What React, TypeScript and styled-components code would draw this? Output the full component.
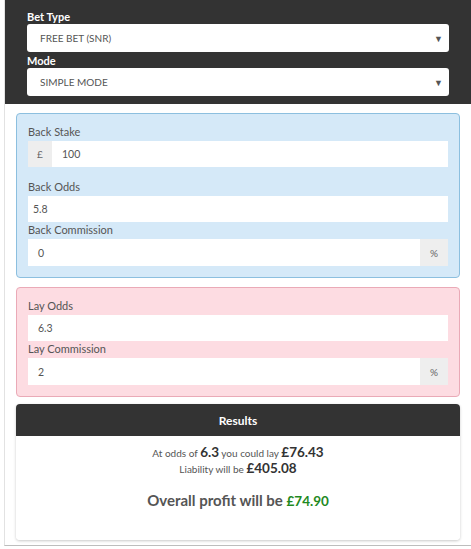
import React from "react";
import styled, { createGlobalStyle } from "styled-components";

const Global = createGlobalStyle`
  html, body { margin: 0; padding: 0; background: #fff; }
  body { font-family: "Lato", "Open Sans", sans-serif; }
  * { box-sizing: border-box; }
`;

const Page = styled.div`
  margin-left: 4px;
  width: 467px;
  height: 546px;
  border-left: 1px solid #e2e2e2;
  border-bottom: 1px solid #bdbdbd;
  display: flex;
  flex-direction: column;
`;

const Header = styled.div`
  background: #333333;
  padding: 10px 22px 8px 22px;
  display: flex;
  flex-direction: column;
`;

const HeaderLabel = styled.div`
  color: #fff;
  font-weight: 700;
  font-size: 11px;
  line-height: 14px;
  height: 14px;
`;

const Select = styled.div<{ $gap?: number }>`
  height: 28px;
  background: #fff;
  border-radius: 3px;
  display: flex;
  align-items: center;
  justify-content: space-between;
  padding: 0 6px 0 13px;
  margin-bottom: ${(p) => p.$gap ?? 0}px;
  color: #555;
  font-size: 10px;
  text-transform: uppercase;
`;

const Arrow = styled.span`
  font-size: 9px;
  color: #555;
`;

const Panel = styled.div<{ $tone: "blue" | "pink" }>`
  margin: 9px 11px 0 11px;
  background: ${(p) => (p.$tone === "blue" ? "#d5e9f8" : "#fddce2")};
  border: 1px solid ${(p) => (p.$tone === "blue" ? "#8cbfdf" : "#eaaab7")};
  border-radius: 4px;
  padding: 10px 11px 11px 11px;
  display: flex;
  flex-direction: column;
`;

const Field = styled.div<{ $space?: number }>`
  display: flex;
  flex-direction: column;
  margin-bottom: ${(p) => p.$space ?? 0}px;
`;

const Label = styled.div`
  font-size: 11px;
  line-height: 16px;
  color: #555;
  margin-bottom: 1px;
`;

const InputGroup = styled.div<{ $h?: number }>`
  display: flex;
  height: ${(p) => p.$h ?? 27}px;
  background: #fff;
`;

const Addon = styled.div<{ $w: number }>`
  width: ${(p) => p.$w}px;
  background: #eeeeee;
  color: #666;
  font-size: 10px;
  display: flex;
  align-items: center;
  justify-content: center;
`;

const Value = styled.div<{ $pad?: number }>`
  flex: 1;
  display: flex;
  align-items: center;
  padding-left: ${(p) => p.$pad ?? 10}px;
  color: #555;
  font-size: 10.5px;
`;

const Results = styled.div`
  margin: 7px 11px 0 11px;
  border-radius: 4px;
  overflow: hidden;
  box-shadow: 0 1px 3px rgba(0, 0, 0, 0.22);
  display: flex;
  flex-direction: column;
  height: 136px;
`;

const ResultsHead = styled.div`
  background: #333;
  color: #fff;
  font-weight: 700;
  font-size: 12px;
  height: 32px;
  display: flex;
  align-items: center;
  justify-content: center;
`;

const ResultsBody = styled.div`
  flex: 1;
  background: #fff;
  display: flex;
  flex-direction: column;
  align-items: center;
  padding-top: 9px;
  color: #555;
`;

const Line = styled.div`
  font-size: 10px;
  line-height: 15px;
`;

const Big = styled.b`
  font-size: 13.5px;
  color: #333;
`;

const Profit = styled.div`
  margin-top: 14px;
  font-size: 15px;
  font-weight: 700;
  color: #555;
`;

const Green = styled.span`
  color: #1f8a1f;
  font-size: 13.5px;
`;

export default function App() {
  return (
    <>
      <Global />
      <Page>
        <Header>
          <HeaderLabel>Bet Type</HeaderLabel>
          <Select $gap={2}>
            <span>Free Bet (SNR)</span>
            <Arrow>▼</Arrow>
          </Select>
          <HeaderLabel>Mode</HeaderLabel>
          <Select>
            <span>Simple Mode</span>
            <Arrow>▼</Arrow>
          </Select>
        </Header>

        <Panel $tone="blue">
          <Field $space={12}>
            <Label>Back Stake</Label>
            <InputGroup $h={26}>
              <Addon $w={24}>£</Addon>
              <Value>100</Value>
            </InputGroup>
          </Field>
          <Field>
            <Label>Back Odds</Label>
            <InputGroup $h={26}>
              <Value $pad={5}>5.8</Value>
            </InputGroup>
          </Field>
          <Field>
            <Label>Back Commission</Label>
            <InputGroup>
              <Value $pad={10}>0</Value>
              <Addon $w={28}>%</Addon>
            </InputGroup>
          </Field>
        </Panel>

        <Panel $tone="pink">
          <Field>
            <Label>Lay Odds</Label>
            <InputGroup $h={26}>
              <Value>6.3</Value>
            </InputGroup>
          </Field>
          <Field>
            <Label>Lay Commission</Label>
            <InputGroup>
              <Value>2</Value>
              <Addon $w={28}>%</Addon>
            </InputGroup>
          </Field>
        </Panel>

        <Results>
          <ResultsHead>Results</ResultsHead>
          <ResultsBody>
            <Line>
              At odds of <Big>6.3</Big> you could lay <Big>£76.43</Big>
            </Line>
            <Line>
              Liability will be <Big>£405.08</Big>
            </Line>
            <Profit>
              Overall profit will be <Green>£74.90</Green>
            </Profit>
          </ResultsBody>
        </Results>
      </Page>
    </>
  );
}
